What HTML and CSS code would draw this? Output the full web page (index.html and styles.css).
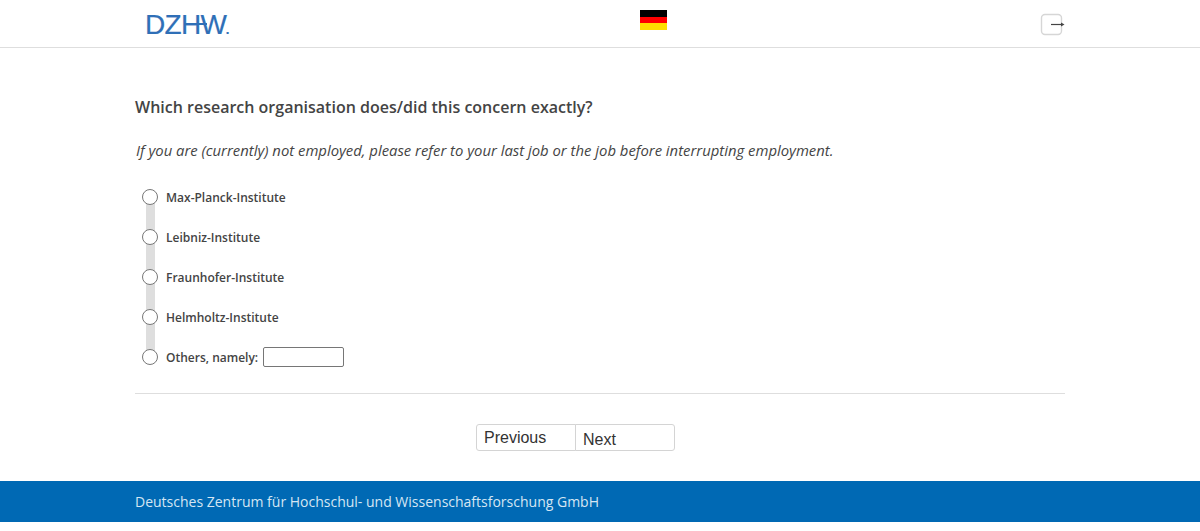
FILE: index.html
```html
<!DOCTYPE html>
<html lang="en">
<head>
    <meta charset="UTF-8">
    <meta name="viewport" content="width=device-width, initial-scale=1.0">
    <title>Survey</title>
    <link rel="stylesheet" href="styles.css">
</head>
<body>
    <header class="top-bar">
        <div class="top-inner">
            <div class="logo"><span class="logo-text">DZH</span><span class="logo-w">W</span><span class="logo-dot">.</span><span class="logo-line"></span></div>
            <div class="flag"><span class="flag-black"></span><span class="flag-red"></span><span class="flag-gold"></span></div>
            <button class="exit-btn" aria-label="Exit">
                <svg width="26" height="24" viewBox="0 0 26 24">
                    <rect x="1.5" y="2.5" width="20" height="20" rx="3.5" fill="none" stroke="#d6d6d6" stroke-width="1.4"/>
                    <path d="M11 12.5h11" stroke="#444" stroke-width="1.2" fill="none"/>
                    <path d="M21 10.5l3.5 2-3.5 2z" fill="#444"/>
                </svg>
            </button>
        </div>
    </header>
    <main class="container">
        <h1 class="question">Which research organisation does/did this concern exactly?</h1>
        <p class="hint">If you are (currently) not employed, please refer to your last job or the job before interrupting employment.</p>
        <ul class="options">
            <li class="option"><span class="radio"></span><label>Max-Planck-Institute</label></li>
            <li class="option"><span class="radio"></span><label>Leibniz-Institute</label></li>
            <li class="option"><span class="radio"></span><label>Fraunhofer-Institute</label></li>
            <li class="option"><span class="radio"></span><label>Helmholtz-Institute</label></li>
            <li class="option"><span class="radio"></span><label>Others, namely:</label><input class="other-input" type="text"></li>
        </ul>
        <div class="buttons">
            <button class="nav-btn prev">Previous</button>
            <button class="nav-btn next">Next</button>
        </div>
    </main>
    <footer class="site-footer">
        <div class="footer-inner">Deutsches Zentrum für Hochschul- und Wissenschaftsforschung GmbH</div>
    </footer>
</body>
</html>
```

FILE: styles.css
```css
* {
    box-sizing: border-box;
}
body {
    margin: 0;
    background: #fff;
    font-family: 'Open Sans', sans-serif;
    color: #444;
}
.top-bar {
    height: 48px;
    border-bottom: 1px solid #dedede;
}
.top-inner {
    width: 930px;
    margin: 0 auto;
    display: flex;
    justify-content: space-between;
    position: relative;
}
.logo {
    position: relative;
    margin: 10px 0 0 10px;
    height: 30px;
    width: 122px;
    font-family: 'Liberation Sans', sans-serif;
    font-size: 28px;
    line-height: 30px;
    color: #2f6fb7;
    letter-spacing: -0.7px;
    -webkit-text-stroke: 0.2px #2f6fb7;
}
.logo-w {
    letter-spacing: -1.2px;
}
.logo-dot {
    font-size: 13px;
    font-weight: bold;
}
.logo-line {
    position: absolute;
    left: 43px;
    top: 13px;
    width: 19px;
    height: 2px;
    background: #2f6fb7;
}
.flag {
    width: 27px;
    height: 20px;
    margin-top: 10px;
    display: flex;
    flex-direction: column;
}
.flag span {
    flex: 1;
}
.flag-black {
    background: #000;
}
.flag-red {
    background: #f00;
}
.flag-gold {
    background: #ffdf00;
}
.exit-btn {
    width: 25px;
    height: 24px;
    margin-top: 12px;
    padding: 0;
    border: none;
    background: none;
}
.container {
    width: 930px;
    margin: 0 auto;
    padding-top: 48px;
}
.question {
    margin: 0;
    font-size: 16px;
    line-height: 22px;
    font-weight: 600;
}
.hint {
    margin: 21px 0 0 1px;
    font-size: 14.85px;
    line-height: 22px;
    font-style: italic;
}
.options {
    list-style: none;
    margin: 16px 0 0;
    padding: 0 0 16px;
    border-bottom: 1px solid #dedede;
}
.option {
    position: relative;
    height: 40px;
    display: flex;
    align-items: center;
    padding-left: 7px;
    font-size: 12px;
    font-weight: 600;
}
.option:not(:last-child)::after {
    content: "";
    position: absolute;
    left: 11px;
    top: 20px;
    width: 9px;
    height: 40px;
    background: #dedede;
}
.radio {
    position: relative;
    z-index: 1;
    width: 16px;
    height: 16px;
    border: 1px solid #777;
    border-radius: 50%;
    background: #fff;
    margin-right: 8px;
}
.other-input {
    width: 81px;
    height: 20px;
    margin-left: 5px;
    padding: 0 4px;
    border: 1px solid #767676;
    border-radius: 2px;
}
.buttons {
    display: flex;
    justify-content: center;
    margin-top: 30px;
    padding-right: 49px;
}
.nav-btn {
    width: 100px;
    height: 27px;
    padding: 0 7px;
    background: #fff;
    border: 1px solid #d4d4d4;
    font-family: 'Liberation Sans', sans-serif;
    font-size: 16px;
    color: #333;
    text-align: left;
}
.prev {
    border-radius: 3px 0 0 3px;
}
.next {
    margin-left: -1px;
    border-radius: 0 3px 3px 0;
    padding-top: 5px;
}
.site-footer {
    margin-top: 30px;
    height: 41px;
    background: #0069b4;
}
.footer-inner {
    width: 930px;
    margin: 0 auto;
    font-size: 14px;
    line-height: 41px;
    color: #d5e6f3;
}
```
